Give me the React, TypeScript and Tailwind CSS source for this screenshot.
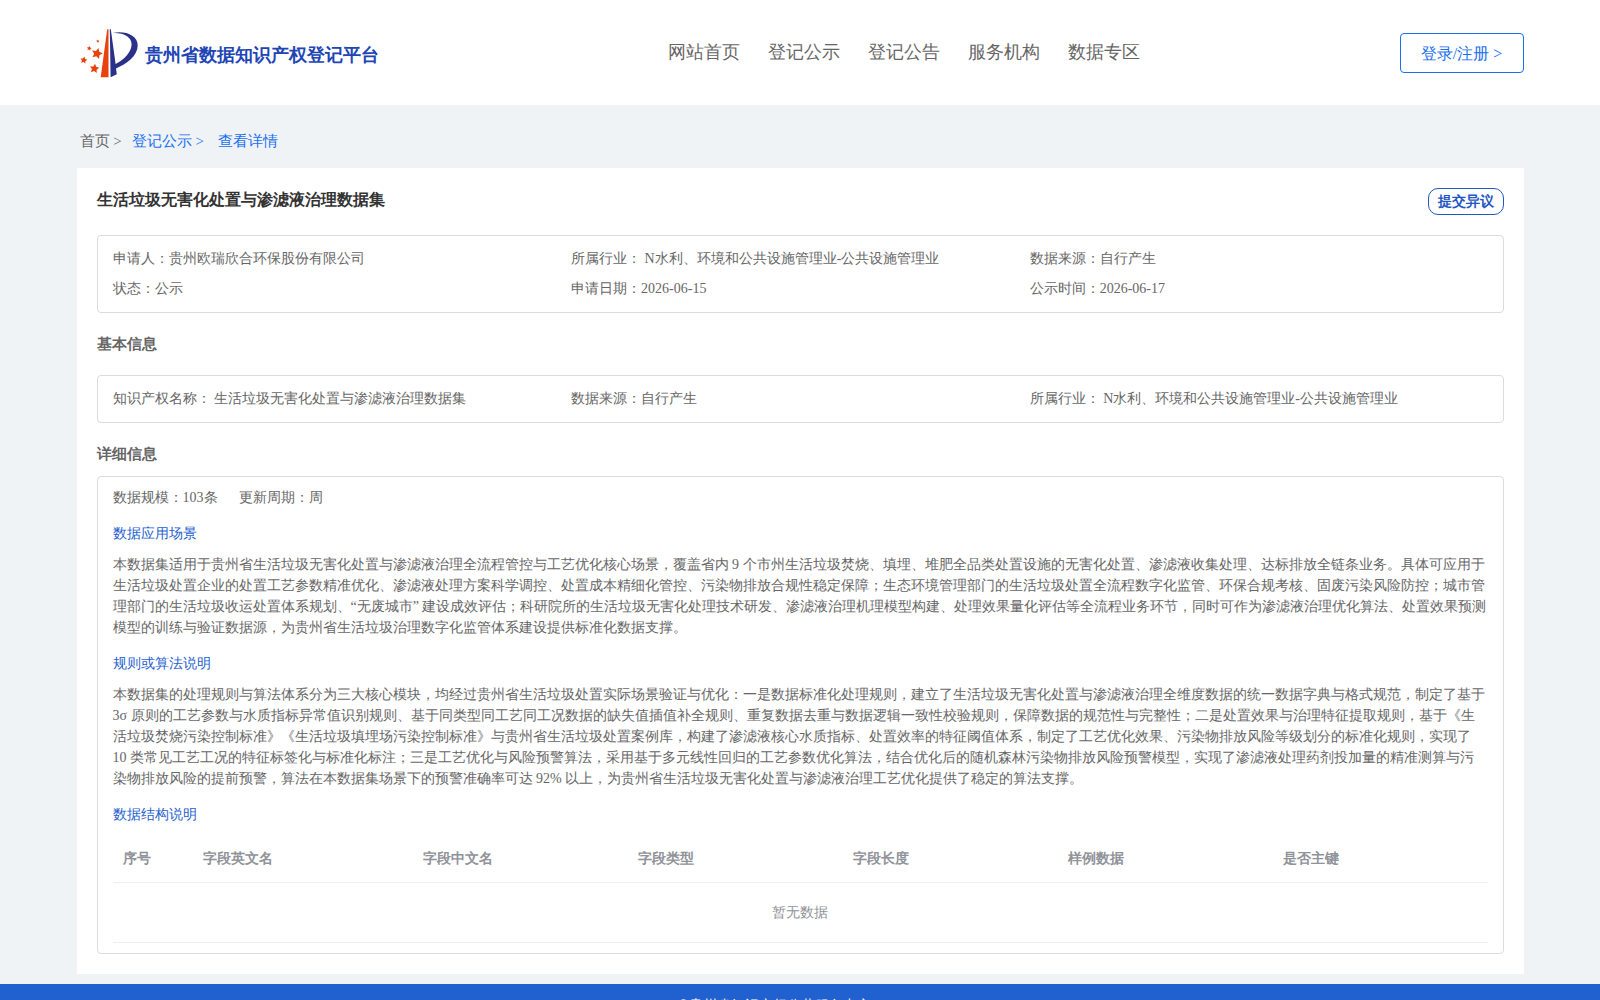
import React from "react";

const NAV = ["网站首页", "登记公示", "登记公告", "服务机构", "数据专区"];

const SUMMARY = [
  "申请人：贵州欧瑞欣合环保股份有限公司",
  "所属行业： N水利、环境和公共设施管理业-公共设施管理业",
  "数据来源：自行产生",
  "状态：公示",
  "申请日期：2026-06-15",
  "公示时间：2026-06-17",
];

const BASIC = [
  "知识产权名称： 生活垃圾无害化处置与渗滤液治理数据集",
  "数据来源：自行产生",
  "所属行业： N水利、环境和公共设施管理业-公共设施管理业",
];

const SCENE =
  "本数据集适用于贵州省生活垃圾无害化处置与渗滤液治理全流程管控与工艺优化核心场景，覆盖省内 9 个市州生活垃圾焚烧、填埋、堆肥全品类处置设施的无害化处置、渗滤液收集处理、达标排放全链条业务。具体可应用于生活垃圾处置企业的处置工艺参数精准优化、渗滤液处理方案科学调控、处置成本精细化管控、污染物排放合规性稳定保障；生态环境管理部门的生活垃圾处置全流程数字化监管、环保合规考核、固废污染风险防控；城市管理部门的生活垃圾收运处置体系规划、“无废城市” 建设成效评估；科研院所的生活垃圾无害化处理技术研发、渗滤液治理机理模型构建、处理效果量化评估等全流程业务环节，同时可作为渗滤液治理优化算法、处置效果预测模型的训练与验证数据源，为贵州省生活垃圾治理数字化监管体系建设提供标准化数据支撑。";

const RULES =
  "本数据集的处理规则与算法体系分为三大核心模块，均经过贵州省生活垃圾处置实际场景验证与优化：一是数据标准化处理规则，建立了生活垃圾无害化处置与渗滤液治理全维度数据的统一数据字典与格式规范，制定了基于 3σ 原则的工艺参数与水质指标异常值识别规则、基于同类型同工艺同工况数据的缺失值插值补全规则、重复数据去重与数据逻辑一致性校验规则，保障数据的规范性与完整性；二是处置效果与治理特征提取规则，基于《生活垃圾焚烧污染控制标准》《生活垃圾填埋场污染控制标准》与贵州省生活垃圾处置案例库，构建了渗滤液核心水质指标、处置效率的特征阈值体系，制定了工艺优化效果、污染物排放风险等级划分的标准化规则，实现了 10 类常见工艺工况的特征标签化与标准化标注；三是工艺优化与风险预警算法，采用基于多元线性回归的工艺参数优化算法，结合优化后的随机森林污染物排放风险预警模型，实现了渗滤液处理药剂投加量的精准测算与污染物排放风险的提前预警，算法在本数据集场景下的预警准确率可达 92% 以上，为贵州省生活垃圾无害化处置与渗滤液治理工艺优化提供了稳定的算法支撑。";

const COLUMNS = ["序号", "字段英文名", "字段中文名", "字段类型", "字段长度", "样例数据", "是否主键"];

function Star({ x, y, r, rot = 0 }: { x: number; y: number; r: number; rot?: number }) {
  return (
    <polygon
      fill="#e8420f"
      transform={`translate(${x} ${y}) rotate(${rot}) scale(${r})`}
      points="0,-1 .29,-.4 .95,-.31 .47,.15 .59,.81 0,.49 -.59,.81 -.47,.15 -.95,-.31 -.29,-.4"
    />
  );
}

function Logo() {
  return (
    <svg width="60" height="52" viewBox="0 0 60 52" className="block shrink-0">
      <Star x={3.8} y={33.2} r={3.7} rot={10} />
      <Star x={9.2} y={21.4} r={2.5} rot={12} />
      <Star x={17.8} y={14.2} r={1.7} />
      <Star x={17} y={26.6} r={5.8} rot={15} />
      <Star x={14.4} y={41.6} r={5} rot={8} />
      <path fill="#e8420f" d="M27.2 2.3h1.3v48h-7.8z" />
      <path fill="#2b318a" d="M29.8 2.3h1l4.8 34.8c8.4-4.5 16-11.8 16-19.8 0-7.5-8.1-11.9-18.9-11.3 12.5-2.6 25 2.3 25 12.3 0 11-11.2 18.5-21.7 23.3l.8 5.7-6.2 3z" />
    </svg>
  );
}

function InfoBox({ items }: { items: string[] }) {
  return (
    <div className="grid grid-cols-[458.6px_458.6px_1fr] rounded-[4px] border border-[#dcdcdc] px-[15px] py-2 leading-[30px]">
      {items.map((t) => (
        <div key={t}>{t}</div>
      ))}
    </div>
  );
}

export default function App() {
  return (
    <div className="h-[1000px] overflow-hidden bg-[#eff3f6] font-['Liberation_Serif',serif] text-sm text-[#666]">
      <header className="h-[105px] bg-white">
        <div className="mx-auto flex h-full w-[1447px] items-center justify-between pl-[3px]">
          <div className="flex items-center">
            <Logo />
            <span className="ml-[5px] mt-1.5 text-[18px] font-bold text-[#2145b5]">贵州省数据知识产权登记平台</span>
          </div>
          <nav className="ml-[30px] flex gap-7 text-[18px]">
            {NAV.map((n) => (
              <a key={n}>{n}</a>
            ))}
          </nav>
          <button className="h-10 w-[124px] rounded-[4px] border border-[#1a6ff0] pt-0.5 text-base text-[#1a6ff0]">登录/注册 &gt;</button>
        </div>
      </header>

      <main className="mx-auto w-[1447px]">
        <div className="flex h-[63px] items-center pl-[3px] pt-2.5 text-[15px]">
          <span>首页 &gt;</span>
          <span className="ml-[10px] text-[#1a6ff0]">登记公示 &gt;</span>
          <span className="ml-[14px] text-[#1a6ff0]">查看详情</span>
        </div>

        <section className="h-[806px] bg-white px-5 pt-5">
          <div className="flex h-[47px] items-start justify-between">
            <h1 className="text-base font-bold text-[#333]">生活垃圾无害化处置与渗滤液治理数据集</h1>
            <button className="h-[27px] w-[76px] rounded-[10px] border border-[#1f57c3] font-bold text-[#1f57c3]">提交异议</button>
          </div>
          <InfoBox items={SUMMARY} />
          <h2 className="h-[62px] pt-[21px] text-[15px] font-bold">基本信息</h2>
          <InfoBox items={BASIC} />
          <h2 className="h-[53px] pt-[21px] text-[15px] font-bold">详细信息</h2>

          <div className="h-[478px] rounded-[4px] border border-[#dcdcdc] px-[15px] pt-[10px] leading-[21px]">
            <div className="flex gap-[21px]">
              <span>数据规模：103条</span>
              <span>更新周期：周</span>
            </div>
            <h3 className="mt-[15px] text-[#1f5fd0]">数据应用场景</h3>
            <p className="mt-[10px]">{SCENE}</p>
            <h3 className="mt-[15px] text-[#1f5fd0]">规则或算法说明</h3>
            <p className="mt-[10px]">{RULES}</p>
            <h3 className="mt-[15px] text-[#1f5fd0]">数据结构说明</h3>
            <table className="mt-[10px] w-full table-fixed border-separate border-spacing-0 text-left text-[#909399]">
              <colgroup>
                <col className="w-20" />
                <col className="w-[220px]" />
              </colgroup>
              <thead>
                <tr>
                  {COLUMNS.map((c) => (
                    <th key={c} className="h-12 border-b border-[#ebeef5] px-[10px] font-bold">{c}</th>
                  ))}
                </tr>
              </thead>
              <tbody>
                <tr>
                  <td colSpan={7} className="h-[60px] border-b border-[#ebeef5] text-center">暂无数据</td>
                </tr>
              </tbody>
            </table>
          </div>
        </section>
      </main>

      <footer className="mt-[10px] h-20 bg-[#2160cf] pl-[678px] pt-3 leading-5 text-white">©贵州省知识产权公共服务中心</footer>
    </div>
  );
}
